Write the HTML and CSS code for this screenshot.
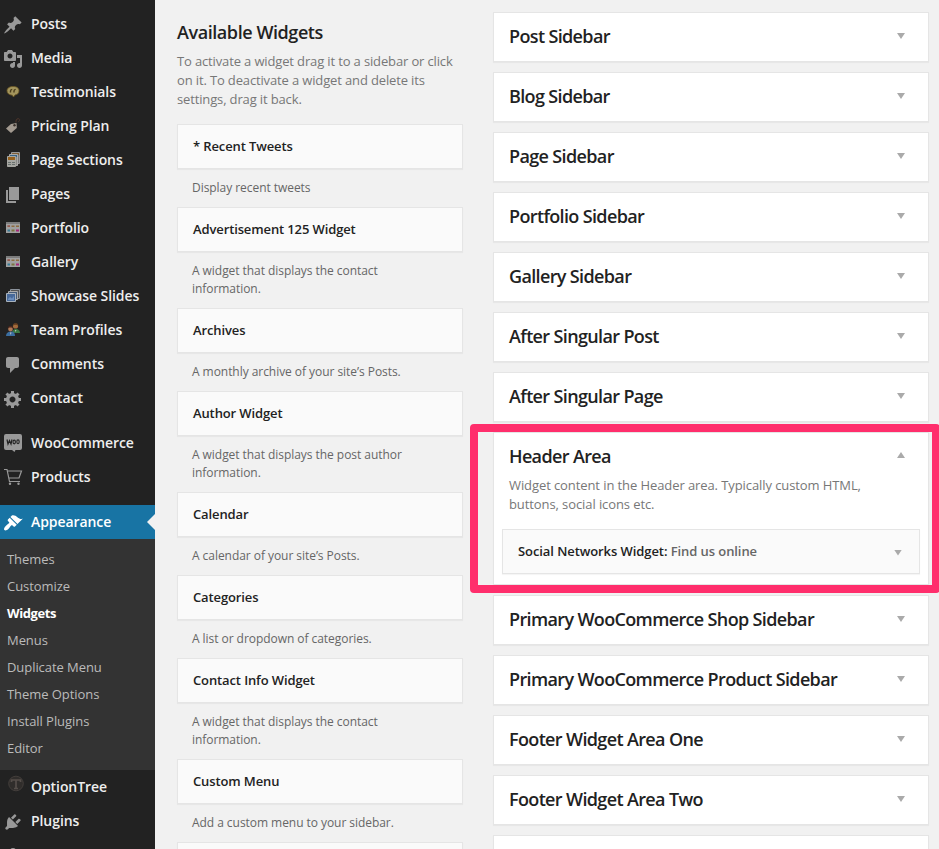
FILE: index.html
```html
<!DOCTYPE html>
<html lang="en">
<head>
<meta charset="utf-8">
<title>Widgets</title>
<link rel="stylesheet" href="styles.css">
</head>
<body>
<div class="app">
<nav class="menu">
  <a class="item"><svg class="icon" viewBox="0 0 20 20"><path d="M10.44 3.02l1.82-1.82 6.36 6.35-1.83 1.82c-1.05-.68-2.48-.57-3.41.36l-.75.75c-.92.93-1.04 2.35-.35 3.41l-1.83 1.82-2.41-2.41-2.8 2.79c-.42.42-3.38 2.71-3.8 2.29s1.86-3.39 2.28-3.81l2.79-2.79L4.1 9.36l1.83-1.82c1.05.69 2.48.57 3.4-.36l.75-.75c.93-.92 1.05-2.35.36-3.41z"/></svg><span>Posts</span></a>
  <a class="item"><svg class="icon" viewBox="0 0 20 20"><path d="M13 11V4c0-.55-.45-1-1-1h-1.67L9 1H5L3.67 3H2c-.55 0-1 .45-1 1v7c0 .55.45 1 1 1h10c.55 0 1-.45 1-1zM7 4.5c1.38 0 2.5 1.12 2.5 2.5S8.38 9.5 7 9.5 4.5 8.38 4.5 7 5.62 4.5 7 4.5zM14 6h5v10.5c0 1.38-1.12 2.5-2.5 2.5S14 17.88 14 16.5s1.12-2.5 2.5-2.5c.17 0 .34.02.5.05V9h-3V6zm-4 8.05V13h2v3.5c0 1.38-1.12 2.5-2.5 2.5S7 17.88 7 16.5 8.12 14 9.5 14c.17 0 .34.02.5.05z"/></svg><span>Media</span></a>
  <a class="item"><svg class="icon" viewBox="0 0 20 20"><path d="M10 3.500c3.600 0 6 1.500 6 4.200s-1.600 3.800-4 4.300L10.500 14l-1.300-1.800C6 12 4 10.300 4 7.800s2.400-4.300 6-4.300z" fill="#a3955d" stroke="#6b5722" stroke-width=".8"/><path d="M7.500 9.500V8q0-1.300 1.700-1.600M11 9.500V8q0-1.300 1.700-1.600" fill="none" stroke="#4a3d1c" stroke-width="1.400"/></svg><span>Testimonials</span></a>
  <a class="item"><svg class="icon" viewBox="0 0 20 20"><path d="M13 5.500c0-2 0-3.500 2-3.800 2-.2 2.300 2 .3 3" fill="none" stroke="#50362a"/><path d="M3 11.500L8 7l5.500-1 .3 5-5.800 5z" fill="#a39a90"/><circle cx="11.500" cy="8.300" r="1.200" fill="#3a302a"/></svg><span>Pricing Plan</span></a>
  <a class="item"><svg class="icon" viewBox="0 0 20 20"><path d="M8.500 1.500h8v11h-8z" fill="#777" stroke="#999"/><path d="M9 3h7" stroke="#7d5e36" stroke-width="2"/><path d="M6.500 3.500h8v11h-8z" fill="#8a8a86" stroke="#aaa"/><path d="M7 5h7" stroke="#376384" stroke-width="2"/><path d="M4.500 5.500h8v10h-8z" fill="#a6a6a1" stroke="#a6a6a1"/><path d="M5 6h7v3H5z" fill="#95601c"/><path d="M5 11.500h3m1 0h3m-7 2h3m1 0h3" stroke="#68706e"/></svg><span>Page Sections</span></a>
  <a class="item"><svg class="icon" viewBox="0 0 20 20"><path d="M6 15V2h10v13H6zm-1 1h8v2H3V5h2v11z"/></svg><span>Pages</span></a>
  <a class="item"><svg class="icon" viewBox="0 0 20 20"><use href="#grid"/></svg><span>Portfolio</span></a>
  <a class="item"><svg class="icon" viewBox="0 0 20 20"><g id="grid"><path d="M3 3h14v11H3z" fill="#a0a0a0"/><path d="M3 3h14v2H3z" fill="#7c7c7c"/><path d="M4.500 6.500h2.500v1.500H4.500zm4 0h3v1.500h-3zm4.500 0h3v1.500h-3z" fill="#8d6b3e"/><path d="M4.500 6.500h2.500v1H4.500z" fill="#974b5b"/><path d="M4.500 10.500h2.500v2H4.500z" fill="#397a96"/><path d="M8.500 10.500h3v2h-3z" fill="#7a7440"/><path d="M13 10.500h3v2h-3z" fill="#a42776"/></g></svg><span>Gallery</span></a>
  <a class="item"><svg class="icon" viewBox="0 0 20 20"><path d="M7.500 2.500h9v9h-9z" fill="#555" stroke="#8b929b"/><path d="M5.500 4.500h9v8h-9z" fill="#455b78" stroke="#aaa"/><path d="M3.500 6.500h9v8h-9z" fill="#47699a" stroke="#a9b3bd"/><path d="M5 12l2-2 2 1.500L11 9v4H5z" fill="#6d8fbd"/></svg><span>Showcase Slides</span></a>
  <a class="item"><svg class="icon" viewBox="0 0 20 20"><path d="M9 12c.3-3 2-4 4-4s4 1.500 4 4z" fill="#3c7a44"/><path d="M3 15c0-3 2-4.500 5-4.500s4 2 4 4.500z" fill="#3b6ea0"/><circle cx="12.500" cy="5" r="2.600" fill="#a26a3b"/><path d="M9.800 5c-.3-4 6-4 5.400 0-1-1.500-4-2-5.400 0z" fill="#603c20"/><circle cx="7.500" cy="8" r="2.400" fill="#b17a58"/><path d="M4.700 8c0-4.500 6-4 5.500 0-1-1.700-4-2-5.500 0z" fill="#47261d"/><path d="M7 11.500l.7 2.500.8-2.500zM12 9l.7 2 .7-2z" fill="#c8c8c8"/></svg><span>Team Profiles</span></a>
  <a class="item"><svg class="icon" viewBox="0 0 20 20"><path d="M5 2h9c1.100 0 2 .9 2 2v7c0 1.100-.9 2-2 2h-2l-5 5v-5H5c-1.100 0-2-.9-2-2V4c0-1.100.9-2 2-2z"/></svg><span>Comments</span></a>
  <a class="item"><svg class="icon" viewBox="0 0 20 20"><path d="M18 12h-2.180c-.17.7-.44 1.350-.81 1.930l1.540 1.540-2.100 2.100-1.540-1.540c-.58.36-1.230.63-1.910.79V19H8v-2.180c-.68-.16-1.330-.43-1.910-.79l-1.540 1.540-2.120-2.120 1.540-1.540c-.36-.58-.63-1.230-.79-1.910H1V9.030h2.170c.16-.7.44-1.350.8-1.940L2.430 5.550l2.100-2.100 1.540 1.540c.58-.37 1.240-.64 1.930-.81V2h3v2.180c.68.16 1.330.43 1.910.79l1.540-1.540 2.120 2.120-1.540 1.540c.36.59.64 1.240.8 1.940H18V12zm-8.500 1.500c1.660 0 3-1.340 3-3s-1.340-3-3-3-3 1.340-3 3 1.340 3 3 3z"/></svg><span>Contact</span></a>
  <div class="gap"></div>
  <a class="item"><svg class="icon" viewBox="0 0 20 20"><path d="M3 0h14q2 0 2 2v12q0 2-2 2h-4.500l-1 2-2.500-2H3q-2 0-2-2V2q0-2 2-2z"/><path d="M4 5.500l1 4.500 1.500-3.500L8 10l1-4.500" fill="none" stroke="#222" stroke-width="1.200"/><ellipse cx="11.200" cy="8" rx="1.200" ry="1.900" fill="none" stroke="#222" stroke-width="1.100"/><ellipse cx="15" cy="7.800" rx="1.200" ry="1.900" fill="none" stroke="#222" stroke-width="1.100"/></svg><span>WooCommerce</span></a>
  <a class="item"><svg class="icon" viewBox="0 0 20 20"><path d="M1 1.500h3l2.500 12h10.500M4.500 3H18.500L16 10H6" fill="none" stroke="#999" stroke-width="1.200"/><circle cx="7" cy="15.700" r="1.200"/><circle cx="15.500" cy="15.700" r="1.200"/></svg><span>Products</span></a>
  <div class="gap"></div>
  <a class="item current"><svg class="icon" viewBox="0 0 20 20"><path d="M14.480 11.060L7.410 3.990l1.500-1.500c.5-.56 2.300-.47 3.510.32 1.210.8 1.430 1.280 2.910 2.100 1.180.64 2.450 1.260 4.450.85zm-.71.71L6.700 4.700 4.930 6.470c-.39.39-.39 1.020 0 1.410l1.060 1.060c.39.39.39 1.030 0 1.420-.6.6-1.430 1.110-2.210 1.690-.35.26-.7.53-1.010.84C1.430 14.230.4 16.080 1.400 17.070c.99 1 2.840-.03 4.180-1.360.31-.31.58-.66.85-1.020.57-.78 1.080-1.610 1.690-2.210.39-.39 1.020-.39 1.410 0l1.060 1.060c.39.39 1.020.39 1.410 0z"/></svg><span>Appearance</span></a>
  <div class="submenu">
    <a>Themes</a><a>Customize</a><a class="on">Widgets</a><a>Menus</a><a>Duplicate Menu</a><a>Theme Options</a><a>Install Plugins</a><a>Editor</a>
  </div>
  <a class="item"><svg class="icon" viewBox="0 0 20 20"><circle cx="13" cy="5.500" r="7.300" fill="#302d2b" stroke="#433e3b"/><path d="M8.500 4V2h9v2M13 2v8.500M11 10.500h4" fill="none" stroke="#554e4a" stroke-width="1.700"/></svg><span>OptionTree</span></a>
  <a class="item"><svg class="icon" viewBox="0 0 20 20"><path d="M13.110 4.360L9.870 7.600 8 5.730l3.240-3.240c.35-.34 1.050-.2 1.560.32.52.51.66 1.210.31 1.550zm-8 1.770l.91-1.120 9.010 9.010-1.190.84c-.71.71-2.630 1.160-3.820 1.160H6.140L4.900 17.260c-.59.59-1.540.59-2.120 0-.59-.58-.59-1.530 0-2.120l1.240-1.240v-3.880c0-1.130.4-3.190 1.090-3.890zm7.260 3.970l3.240-3.240c.34-.35 1.040-.21 1.550.31.52.51.66 1.210.31 1.550l-3.240 3.250z"/></svg><span>Plugins</span></a>
  <a class="item"><svg class="icon" viewBox="0 0 20 20"><circle cx="10" cy="5" r="3"/><path d="M3 17q0-7 7-7t7 7z"/></svg></a>
</nav>

<main class="available">
  <h2>Available Widgets</h2>
  <p class="intro">To activate a widget drag it to a sidebar or click<br>on it. To deactivate a widget and delete its<br>settings, drag it back.</p>
  <div class="widget">* Recent Tweets</div><p class="desc">Display recent tweets</p>
  <div class="widget">Advertisement 125 Widget</div><p class="desc">A widget that displays the contact<br>information.</p>
  <div class="widget">Archives</div><p class="desc">A monthly archive of your site’s Posts.</p>
  <div class="widget">Author Widget</div><p class="desc">A widget that displays the post author<br>information.</p>
  <div class="widget">Calendar</div><p class="desc">A calendar of your site’s Posts.</p>
  <div class="widget">Categories</div><p class="desc">A list or dropdown of categories.</p>
  <div class="widget">Contact Info Widget</div><p class="desc">A widget that displays the contact<br>information.</p>
  <div class="widget">Custom Menu</div><p class="desc">Add a custom menu to your sidebar.</p>
  <div class="widget"></div>
</main>

<section class="areas">
  <div class="area"><h3>Post Sidebar</h3><i class="arrow"></i></div>
  <div class="area"><h3>Blog Sidebar</h3><i class="arrow"></i></div>
  <div class="area"><h3>Page Sidebar</h3><i class="arrow"></i></div>
  <div class="area"><h3>Portfolio Sidebar</h3><i class="arrow"></i></div>
  <div class="area"><h3>Gallery Sidebar</h3><i class="arrow"></i></div>
  <div class="area"><h3>After Singular Post</h3><i class="arrow"></i></div>
  <div class="area"><h3>After Singular Page</h3><i class="arrow"></i></div>
  <div class="area open">
    <div class="head"><h3>Header Area</h3><i class="arrow up"></i></div>
    <p>Widget content in the Header area. Typically custom HTML,<br>buttons, social icons etc.</p>
    <div class="widget placed"><span>Social Networks Widget: <em>Find us online</em></span><i class="arrow"></i></div>
    <div class="highlight"></div>
  </div>
  <div class="area"><h3>Primary WooCommerce Shop Sidebar</h3><i class="arrow"></i></div>
  <div class="area"><h3>Primary WooCommerce Product Sidebar</h3><i class="arrow"></i></div>
  <div class="area"><h3>Footer Widget Area One</h3><i class="arrow"></i></div>
  <div class="area"><h3>Footer Widget Area Two</h3><i class="arrow"></i></div>
  <div class="area"></div>
</section>
</div>
</body>
</html>
```
FILE: styles.css
```css
* { box-sizing: border-box; }
body {
  margin: 0;
  height: 849px;
  overflow: hidden;
  background: #f1f1f1;
  font: 13px/19px "Open Sans", sans-serif;
  color: #777;
}
h2, h3, p { margin: 0; }
h2, h3 { font-size: 18px; line-height: 24px; font-weight: 600; color: #222; }
h2 { letter-spacing: -.43px; }
h3 { line-height: 22px; letter-spacing: -.64px; }
.app { display: flex; height: 849px; overflow: hidden; }

.menu { flex: none; width: 155px; padding-top: 7px; background: #222; }
.item {
  display: flex;
  align-items: center;
  height: 34px;
  padding-left: 3px;
  color: #eee;
  font-size: 14px;
  font-weight: 600;
  letter-spacing: -.07px;
  white-space: nowrap;
}
.item span { padding-bottom: 2px; }
.icon { flex: none; width: 20px; height: 20px; margin: 2px 8px 0 0; overflow: visible; fill: #999; }
.gap { height: 11px; }
.current { position: relative; background: #1874a4; color: #fff; }
.current .icon { fill: #fff; }
.current::after {
  content: "";
  position: absolute;
  right: 0;
  top: 9px;
  border: 8px solid transparent;
  border-left: 0;
  border-right-color: #f1f1f1;
}
.submenu { height: 231px; padding: 7px 0 8px 7px; background: #333; letter-spacing: -.06px; }
.submenu a { display: block; height: 27px; line-height: 27px; color: #bbb; }
.submenu .on { color: #fff; font-weight: 700; letter-spacing: -.4px; }

.available { flex: none; width: 286px; margin-left: 22px; padding-top: 20px; }
.intro { margin: 8px 0 15px; letter-spacing: -.14px; }
.widget {
  display: flex;
  align-items: center;
  height: 45px;
  padding: 0 15px;
  background: #fafafa;
  border: 1px solid #e5e5e5;
  box-shadow: 0 1px 1px rgba(0, 0, 0, .04);
  color: #222;
  font-weight: 600;
  letter-spacing: -.12px;
}
.desc { padding: 10px 15px; font-size: 12px; line-height: 18px; letter-spacing: -.05px; color: #666; }

.areas { flex: none; width: 436px; margin-left: 30px; padding-top: 12px; }
.area {
  display: flex;
  justify-content: space-between;
  height: 50px;
  margin-bottom: 10px;
  padding: 12px 23px 0 15px;
  background: #fff;
  border: 1px solid #e5e5e5;
  box-shadow: 0 1px 1px rgba(0, 0, 0, .04);
}
.arrow { width: 8px; height: 6px; margin-top: 8px; background: #aaa; clip-path: polygon(0 0, 100% 0, 50% 100%); }
.arrow.up { margin-top: 7px; clip-path: polygon(0 100%, 100% 100%, 50% 0); }
.open { position: relative; display: block; height: 153px; padding: 12px 8px; }
.head { display: flex; justify-content: space-between; padding: 0 15px 0 7px; }
.open p { margin: 9px 7px 15px; letter-spacing: -.09px; }
.placed { justify-content: space-between; padding-right: 17px; letter-spacing: -.08px; }
.placed .arrow { margin-top: 2px; }
.placed em { color: #666; font-style: normal; }
.highlight {
  position: absolute;
  left: -24px;
  top: -9px;
  width: 470px;
  height: 169px;
  border: 8px solid #ff2e6c;
  border-radius: 4px;
}
```
